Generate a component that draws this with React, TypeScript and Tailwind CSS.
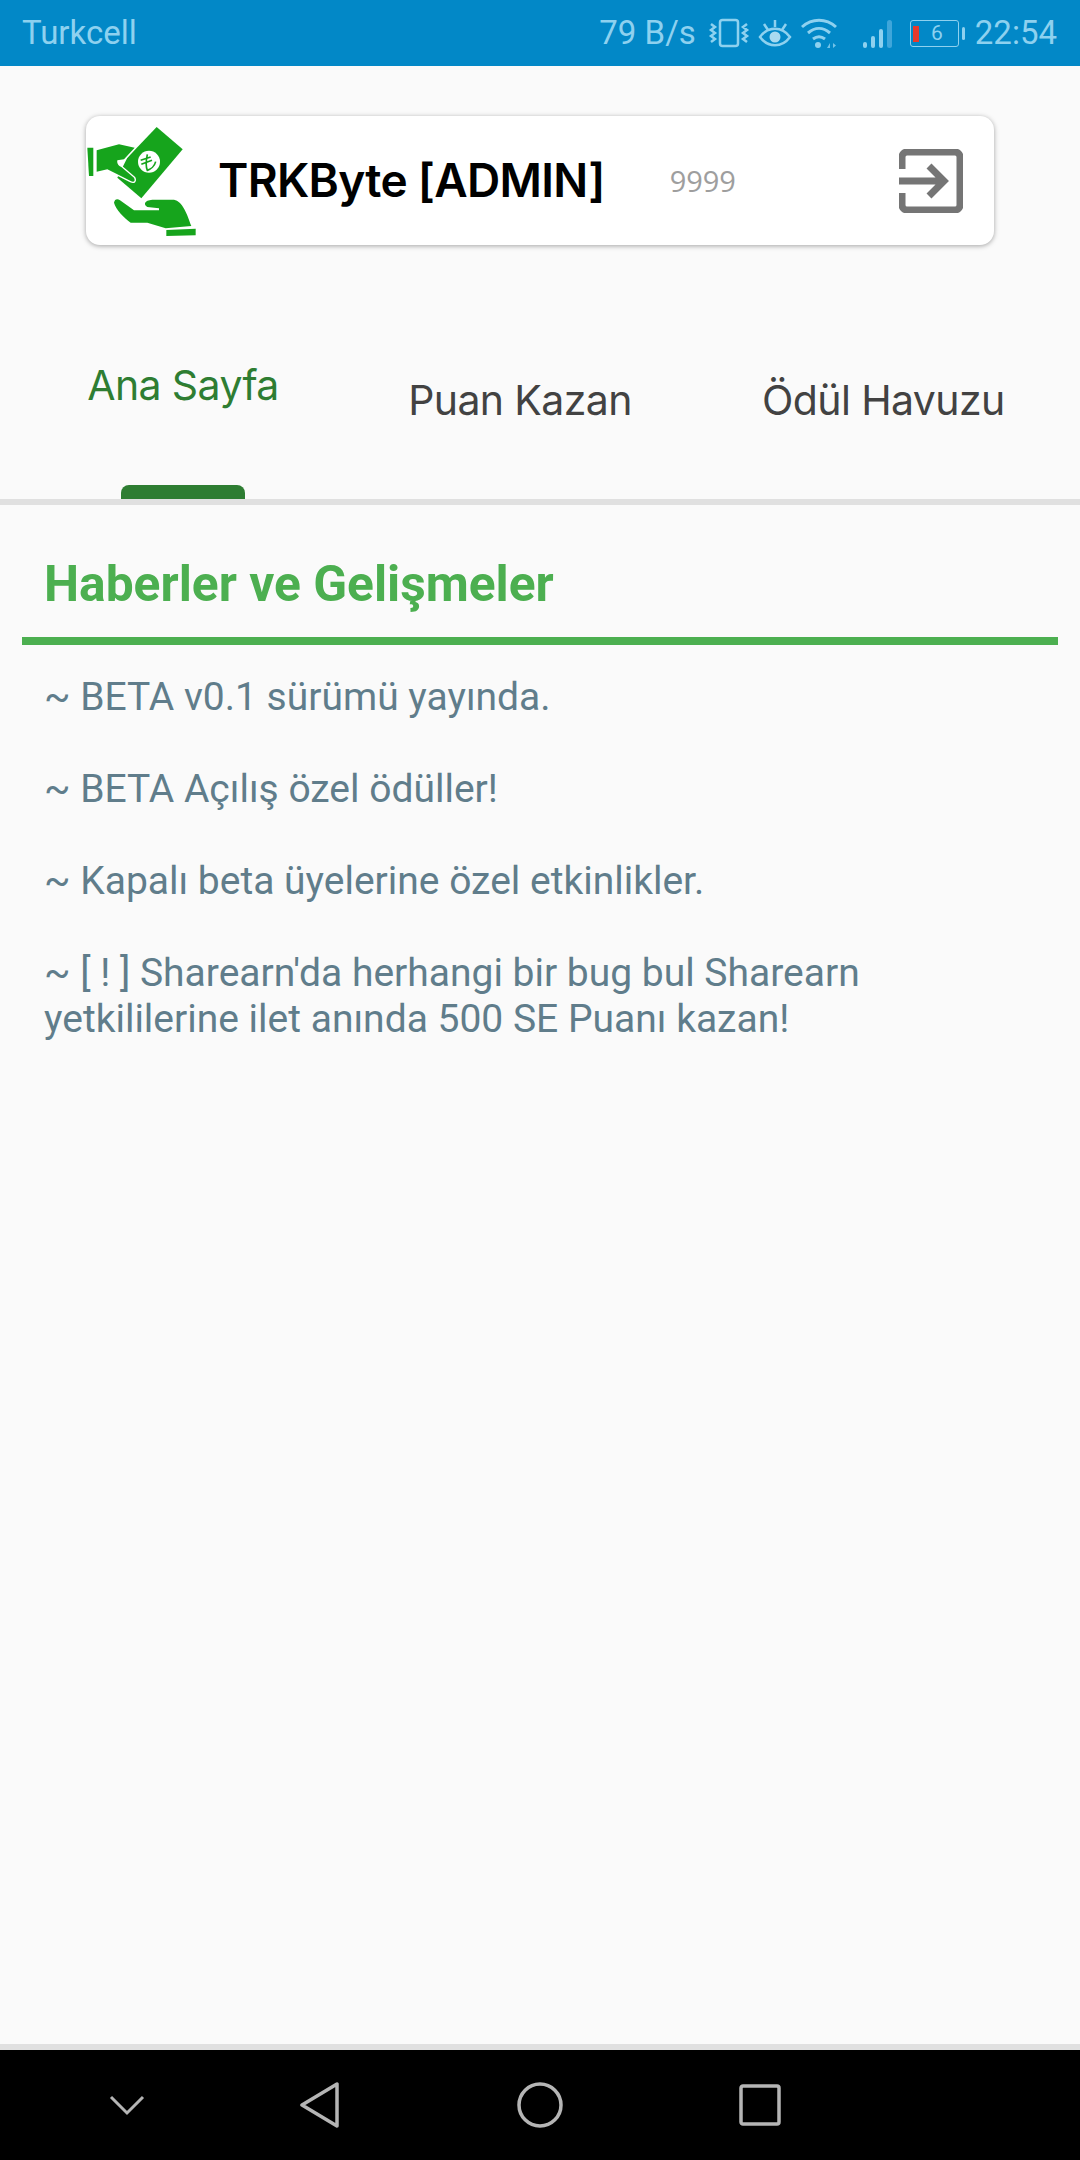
const news = [
  "~ BETA v0.1 sürümü yayında.",
  "~ BETA Açılış özel ödüller!",
  "~ Kapalı beta üyelerine özel etkinlikler.",
  "~ [ ! ] Sharearn'da herhangi bir bug bul Sharearn yetkililerine ilet anında 500 SE Puanı kazan!",
];

function StatusIcons() {
  return (
    <>
      {/* vibrate */}
      <svg width="42" height="32" viewBox="0 0 42 32" fill="none" stroke="#8ed1ef" strokeWidth="2.500" className="ml-[12px]">
        <rect x="12" y="3" width="18" height="26" rx="2.500" />
        <path d="M3 7l4 3-4 3 4 3-4 3 4 3-4 3M39 7l-4 3 4 3-4 3 4 3-4 3 4 3" strokeWidth="2.500" />
      </svg>
      {/* eye comfort */}
      <svg width="34" height="32" viewBox="0 0 34 32" fill="none" stroke="#8ed1ef" strokeWidth="2.500" className="ml-[8px]">
        <path d="M2 20c8-11 22-11 30 0-8 11-22 11-30 0z" />
        <circle cx="17" cy="20" r="5.500" fill="#a8daf0" stroke="none" />
        <path d="M17 3v7M6 7l4 6M28 7l-4 6" strokeWidth="2.500" />
      </svg>
      {/* wifi */}
      <svg width="36" height="32" viewBox="0 0 36 32" fill="none" stroke="#8ed1ef" strokeWidth="3" className="ml-[9px]">
        <path d="M1 10c10-9 24-9 34 0M7 16c7-6 15-6 22 0M12 22c4-3 8-3 12 0" />
        <circle cx="17" cy="28" r="3" fill="#8ed1ef" stroke="none" />
        <path d="M26 31l3-5v5zM32 26l3 2.500-3 2.500z" fill="#8ed1ef" stroke="none" opacity="0.8" />
      </svg>
      {/* signal */}
      <svg width="34" height="32" viewBox="0 0 34 32" fill="#8ed1ef" className="ml-[25px]">
        <rect x="1" y="25" width="4" height="6" rx="2" />
        <rect x="9" y="19" width="4" height="12" rx="2" />
        <rect x="17" y="12" width="4" height="19" rx="2" />
        <rect x="25" y="3" width="5" height="28" rx="2.500" fill="#3fa6da" />
      </svg>
      {/* battery */}
      <div className="ml-[14px] flex items-center">
        <div className="relative flex h-[27px] w-[49px] items-center justify-center rounded-[3px] border border-[#8ed1ef] pl-[5px] font-['Roboto',sans-serif] text-[21px] leading-none text-[#8ed1ef]">
          <span className="absolute left-[2px] top-[5px] h-[16px] w-[6px] bg-[#e8392c]"></span>
          6
        </div>
        <div className="ml-[3px] h-[13px] w-[3px] rounded-full bg-[#8ed1ef]"></div>
      </div>
    </>
  );
}

function MoneyLogo() {
  return (
    <svg width="120" height="120" viewBox="0 0 360 360" className="-ml-[2px] shrink-0">
      {/* bill */}
      <path d="M218 18L296 85 172 232 100 170 130 110z" fill="#16a41c" />
      <circle cx="195" cy="122" r="33" fill="#fff" />
      <path d="M190 100C186 120 184 135 190 148 200 145 212 135 215 122M170 118L200 108M172 130L204 118" fill="none" stroke="#16a41c" strokeWidth="5" />
      {/* giving hand */}
      <path d="M10 80L28 80 28 165 15 165z" fill="#16a41c" />
      <path d="M38 88L105 70 152 80 120 115 100 118C98 128 104 135 112 138L150 170C155 180 150 185 140 180L100 160 70 145 38 152z" fill="#16a41c" stroke="#fff" strokeWidth="8" paintOrder="stroke" strokeLinejoin="round" />
      {/* receiving hand */}
      <path d="M90 245C92 234 100 232 108 238L150 268 225 268 225 262 190 258C178 250 180 238 205 236L270 236C295 240 310 280 322 315L245 322 190 305 140 305C120 290 95 265 90 245z" fill="#16a41c" />
      <path d="M247 327L335 323 335 343 247 345z" fill="#16a41c" />
    </svg>
  );
}

export default function App() {
  return (
    <div className="flex h-[2160px] w-[1080px] flex-col bg-[#fafafa] font-['Roboto',sans-serif]">
      {/* status bar */}
      <div className="flex h-[66px] shrink-0 items-center bg-[#0288c7] pl-[22px] text-[33px] text-[#8ed1ef]">
        <span>Turkcell</span>
        <span className="ml-auto">79 B/s</span>
        <StatusIcons />
        <span className="ml-[10px] mr-[23px]">22:54</span>
      </div>

      {/* user card */}
      <div className="mx-[86px] mt-[50px] flex h-[129px] shrink-0 items-center rounded-[14px] bg-white shadow-[0_1px_5px_rgba(0,0,0,0.35)]">
        <MoneyLogo />
        <span className="ml-[14px] font-['Inter',sans-serif] text-[46px] font-semibold tracking-[-0.7px] text-black">TRKByte [ADMIN]</span>
        <span className="ml-[65px] font-['Open_Sans',sans-serif] text-[29px] text-[#9e9e9e]">9999</span>
        <svg width="64" height="64" viewBox="0 0 64 64" fill="none" stroke="#757575" strokeWidth="7" className="ml-auto mr-[31px]">
          <path d="M3 20V8a5 5 0 0 1 5-5h48a5 5 0 0 1 5 5v48a5 5 0 0 1-5 5H8a5 5 0 0 1-5-5V44" strokeLinecap="butt" />
          <path d="M0 32h44M30 17l15 15-15 15" />
        </svg>
      </div>

      {/* tabs */}
      <div className="mt-[54px] flex h-[200px] shrink-0 items-start font-['Inter',sans-serif] text-[41px] tracking-[-0.6px] text-[#424242]">
        <div className="flex h-[200px] w-[366px] flex-col items-center text-[#2e7d32]">
          <span className="mt-[56px] leading-[60px]">Ana Sayfa</span>
          <div className="mt-auto h-[14px] w-[124px] rounded-t-[8px] bg-[#2e7d32]"></div>
        </div>
        <span className="mt-[71px] w-[308px] text-center leading-[60px]">Puan Kazan</span>
        <span className="mt-[71px] ml-[88px] leading-[60px]">Ödül Havuzu</span>
      </div>
      <div className="h-[6px] shrink-0 bg-[#e0e0e0]"></div>

      {/* news */}
      <div className="flex-1 px-[22px]">
        <h2 className="mt-[29px] pl-[22px] text-[49.7px] font-bold leading-[100px] text-[#4caf50]">Haberler ve Gelişmeler</h2>
        <div className="mt-[3px] h-[8px] bg-[#4caf50]"></div>
        <div className="mt-[29px] flex flex-col gap-[46px] px-[22px] text-[39px] leading-[46px] text-[#607d8b]">
          {news.map((line) => (
            <p key={line}>{line}</p>
          ))}
        </div>
      </div>

      {/* nav */}
      <div className="h-[6px] shrink-0 bg-[#e0e0e0]"></div>
      <div className="flex h-[110px] shrink-0 items-center bg-black">
        <svg width="36" height="22" viewBox="0 0 36 22" fill="none" stroke="#b5b5b5" strokeWidth="3" className="ml-[109px]">
          <path d="M2 3l16 16L34 3" />
        </svg>
        <svg width="40" height="46" viewBox="0 0 40 46" fill="none" stroke="#b5b5b5" strokeWidth="3.500" strokeLinejoin="round" className="ml-[155px]">
          <path d="M37 2v42L2 23z" />
        </svg>
        <svg width="46" height="46" viewBox="0 0 46 46" fill="none" stroke="#b5b5b5" strokeWidth="3.500" className="ml-[177px]">
          <circle cx="23" cy="23" r="21" />
        </svg>
        <svg width="42" height="42" viewBox="0 0 42 42" fill="none" stroke="#b5b5b5" strokeWidth="3.500" strokeLinejoin="round" className="ml-[176px]">
          <rect x="2" y="2" width="38" height="38" rx="2" />
        </svg>
      </div>
    </div>
  );
}
